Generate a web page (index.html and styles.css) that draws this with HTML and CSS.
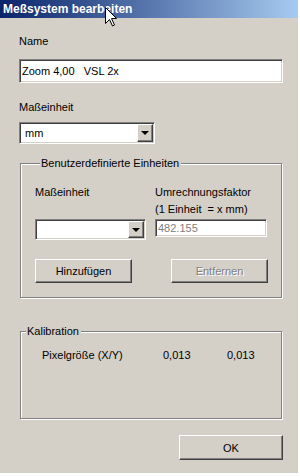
FILE: index.html
```html
<!DOCTYPE html>
<html lang="de">
<head>
    <meta charset="UTF-8">
    <title>Meßsystem bearbeiten</title>
    <link rel="stylesheet" href="styles.css">
</head>
<body>
    <div class="dialog">
        <div class="titlebar">
            Meßsystem bearbeiten
            <svg class="cursor" width="13" height="20" viewBox="0 0 13 20">
                <path d="M0.5 0.5 L0.5 16.5 L4.5 12.5 L7.5 19 L9.5 18 L6.5 11.5 L11.5 11.5 Z" fill="#fff" stroke="#000" stroke-width="1"/>
            </svg>
        </div>

        <div class="content">
            <div class="label name-label">Name</div>
            <input class="field name-field" type="text" value="Zoom 4,00   VSL 2x">

            <div class="label unit-label">Maßeinheit</div>
            <div class="combo unit-combo">
                <span class="combo-text">mm</span>
                <span class="combo-btn"><i class="arrow"></i></span>
            </div>

            <div class="group custom">
                <div class="group-title">Benutzerdefinierte Einheiten</div>
                <div class="fields">
                    <div class="col">
                        <div class="label">Maßeinheit</div>
                        <div class="combo small-combo">
                            <span class="combo-text"></span>
                            <span class="combo-btn"><i class="arrow"></i></span>
                        </div>
                    </div>
                    <div class="col">
                        <div class="label">Umrechnungsfaktor</div>
                        <div class="label hint">(1 Einheit&nbsp; = x mm)</div>
                        <input class="field factor-field" type="text" value="482.155" disabled>
                    </div>
                </div>
                <div class="buttons">
                    <button class="btn add-btn">Hinzufügen</button>
                    <button class="btn remove-btn" disabled>Entfernen</button>
                </div>
            </div>

            <div class="group calib">
                <div class="group-title">Kalibration</div>
                <div class="calib-row">
                    <span class="calib-name">Pixelgröße (X/Y)</span>
                    <span class="calib-x">0,013</span>
                    <span class="calib-y">0,013</span>
                </div>
            </div>

            <div class="footer">
                <button class="btn ok-btn">OK</button>
            </div>
        </div>
    </div>
</body>
</html>
```

FILE: styles.css
```css
*{
    margin: 0;
    padding: 0;
    box-sizing: border-box;
}
body{
    background-color: #fff;
    font-family: "Liberation Sans", Arial, sans-serif;
    font-size: 11px;
    color: #000;
}
.dialog{
    width: 298px;
    height: 473px;
    background-color: #d4d0c8;
}
.titlebar{
    position: relative;
    height: 18px;
    line-height: 18px;
    padding-left: 3px;
    font-weight: bold;
    font-size: 12px;
    color: #fff;
    background: linear-gradient(to right, #0a246a, #a6caf0);
}
.cursor{
    position: absolute;
    left: 105px;
    top: 7px;
}
.content{
    padding: 0 15px 0 19px;
}
.label{
    line-height: 13px;
    height: 13px;
    white-space: nowrap;
}
.name-label{
    margin-top: 17px;
}
.unit-label{
    margin-top: 18px;
}

/* sunken fields */
.field{
    display: block;
    font-family: "Liberation Sans", Arial, sans-serif;
    font-size: 11px;
    color: #000;
    background-color: #fff;
    border: 1px solid;
    border-color: #808080 #fff #fff #808080;
    box-shadow: inset 1px 1px 0 #404040, inset -1px -1px 0 #d4d0c8;
    padding: 0 2px;
    outline: none;
    white-space: pre;
}
.name-field{
    margin-top: 11px;
    width: 264px;
    height: 24px;
}
.factor-field{
    margin-top: 3px;
    width: 112px;
    height: 18px;
    color: #808080;
    -webkit-text-fill-color: #808080;
    opacity: 1;
}

/* combo boxes */
.combo{
    display: flex;
    align-items: stretch;
    background-color: #fff;
    border: 1px solid;
    border-color: #808080 #fff #fff #808080;
    box-shadow: inset 1px 1px 0 #404040, inset -1px -1px 0 #d4d0c8;
    padding: 1px;
}
.combo-text{
    flex: 1;
    padding-left: 4px;
    line-height: 18px;
}
.combo-btn{
    width: 16px;
    display: flex;
    align-items: center;
    justify-content: center;
    background-color: #d4d0c8;
    border: 1px solid;
    border-color: #fff #404040 #404040 #fff;
    box-shadow: inset -1px -1px 0 #808080;
}
.arrow{
    display: block;
    width: 0;
    height: 0;
    border-left: 4px solid transparent;
    border-right: 4px solid transparent;
    border-top: 4px solid #000;
}
.unit-combo{
    margin-top: 8px;
    width: 136px;
    height: 22px;
}
.small-combo{
    margin-top: 20px;
    width: 111px;
    height: 21px;
}

/* group boxes */
.group{
    margin: 0 1px;
    border: 1px solid #808080;
    box-shadow: 1px 1px 0 #fff, inset 1px 1px 0 #fff;
}
.group-title{
    width: fit-content;
    margin: -7px 0 0 5px;
    padding: 0 2px 0 1px;
    line-height: 13px;
    background-color: #d4d0c8;
}
.custom{
    margin-top: 19px;
    height: 135px;
    padding: 0 0 0 14px;
}
.fields{
    margin-top: 16px;
    display: grid;
    grid-template-columns: 120px 112px;
    align-items: start;
}
.hint{
    margin-top: 4px;
}
.buttons{
    margin-top: 19px;
    display: flex;
    gap: 39px;
}

/* buttons */
.btn{
    display: block;
    height: 24px;
    width: 97px;
    font-family: "Liberation Sans", Arial, sans-serif;
    font-size: 11px;
    color: #000;
    background-color: #d4d0c8;
    border: 1px solid;
    border-color: #fff #404040 #404040 #fff;
    box-shadow: inset -1px -1px 0 #808080;
}
.btn:disabled{
    color: #808080;
    text-shadow: 1px 1px 0 #fff;
}

.calib{
    margin-top: 33px;
    height: 88px;
}
.calib-row{
    margin-top: 11px;
    padding-left: 21px;
    line-height: 13px;
    display: flex;
}
.calib-name{
    width: 121px;
}
.calib-x{
    width: 64px;
}
.footer{
    margin-top: 16px;
    display: flex;
    justify-content: flex-end;
}
.ok-btn{
    width: 104px;
    height: 25px;
}
```
